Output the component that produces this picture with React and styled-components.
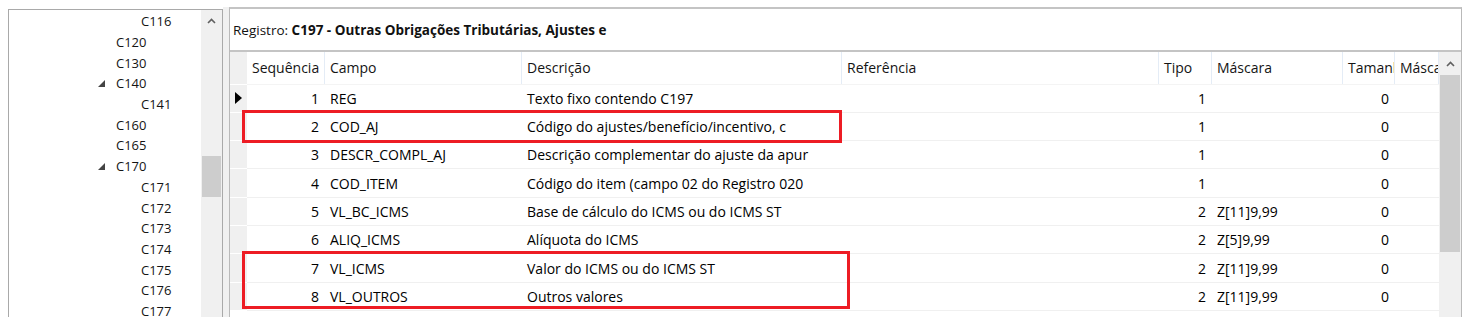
import React from 'react';
import styled, { createGlobalStyle } from 'styled-components';

const GlobalStyle = createGlobalStyle`
  html, body {
    margin: 0;
    padding: 0;
    background: #ffffff;
  }
  body {
    font-family: "Open Sans", "Noto Sans", sans-serif;
    font-size: 14px;
    color: #000;
  }
`;

const COLS = '17px 78px 197px 320px 317px 53px 131px 52px 44px';

const treeItems = [
  { t: 'C116', level: 3 },
  { t: 'C120', level: 2 },
  { t: 'C130', level: 2 },
  { t: 'C140', level: 2, open: true },
  { t: 'C141', level: 3 },
  { t: 'C160', level: 2 },
  { t: 'C165', level: 2 },
  { t: 'C170', level: 2, open: true },
  { t: 'C171', level: 3 },
  { t: 'C172', level: 3 },
  { t: 'C173', level: 3 },
  { t: 'C174', level: 3 },
  { t: 'C175', level: 3 },
  { t: 'C176', level: 3 },
  { t: 'C177', level: 3 },
];

const headers = ['', 'Sequência', 'Campo', 'Descrição', 'Referência', 'Tipo', 'Máscara', 'Tamanho', 'Máscara'];

const rows = [
  [1, 'REG', 'Texto fixo contendo C197', 1, '', 0],
  [2, 'COD_AJ', 'Código do ajustes/benefício/incentivo, c', 1, '', 0],
  [3, 'DESCR_COMPL_AJ', 'Descrição complementar do ajuste da apur', 1, '', 0],
  [4, 'COD_ITEM', 'Código do item (campo 02 do Registro 020', 1, '', 0],
  [5, 'VL_BC_ICMS', 'Base de cálculo do ICMS ou do ICMS ST', 2, 'Z[11]9,99', 0],
  [6, 'ALIQ_ICMS', 'Alíquota do ICMS', 2, 'Z[5]9,99', 0],
  [7, 'VL_ICMS', 'Valor do ICMS ou do ICMS ST', 2, 'Z[11]9,99', 0],
  [8, 'VL_OUTROS', 'Outros valores', 2, 'Z[11]9,99', 0],
];

const highlights = [
  { left: 12, top: 58, width: 600, height: 33 },
  { left: 12, top: 199, width: 608, height: 58 },
];

const Screen = styled.div`
  display: flex;
  align-items: flex-start;
  height: 317px;
  overflow: hidden;
  padding: 7px 8px 0 8px;
  box-sizing: border-box;
`;

const TreePanel = styled.div`
  display: flex;
  width: 215px;
  height: 330px;
  margin-top: 2px;
  border: 1px solid #a9a9a9;
  box-sizing: border-box;
  background: #fff;
`;

const TreeList = styled.div`
  flex: 1;
  padding-top: 1px;
  overflow: hidden;
  font-size: 13px;
`;

const TreeRow = styled.div`
  display: flex;
  align-items: center;
  height: 20.7px;
  padding-left: ${(p) => (p.$level === 3 ? 132 : 107)}px;
  position: relative;
  white-space: nowrap;
  color: #141414;
`;

const Expander = styled.svg`
  position: absolute;
  left: 89px;
  top: 7px;
  width: 7px;
  height: 7px;
`;

const ScrollBar = styled.div`
  display: flex;
  flex-direction: column;
  width: ${(p) => p.$w}px;
  background: #f0f0f0;
  flex-shrink: 0;
`;

const ArrowBox = styled.div`
  display: flex;
  align-items: center;
  justify-content: center;
  height: ${(p) => p.$h}px;
`;

const Thumb = styled.div`
  margin: ${(p) => p.$top}px 1px 0 1px;
  height: ${(p) => p.$h}px;
  background: #cdcdcd;
`;

const Splitter = styled.div`
  width: 6px;
  align-self: stretch;
  background: #f0f0f0;
  flex-shrink: 0;
`;

const RightPanel = styled.div`
  flex: 1;
  display: flex;
  flex-direction: column;
  height: 330px;
  border: 1px solid #b9b9b9;
  border-top: 2px solid #c4c4c4;
  box-sizing: border-box;
  background: #fff;
`;

const TitleBar = styled.div`
  display: flex;
  align-items: center;
  height: 41px;
  padding-left: 3px;
  border-bottom: 2px solid #c4c4c4;
  white-space: nowrap;
  font-size: 13.5px;
  color: #111;
  b {
    font-weight: 700;
  }
`;

const GridArea = styled.div`
  display: flex;
  flex: 1;
`;

const GridBody = styled.div`
  position: relative;
  flex: 1;
  overflow: hidden;
`;

const Row = styled.div`
  display: grid;
  grid-template-columns: ${COLS};
  height: ${(p) => (p.$header ? 32.5 : 28.33)}px;
  box-sizing: border-box;
  border-bottom: 1px solid ${(p) => (p.$header ? '#f4f4f4' : '#f0f0f0')};
`;

const Cell = styled.div`
  display: flex;
  align-items: center;
  justify-content: ${(p) => (p.$right ? 'flex-end' : 'flex-start')};
  padding: 0 ${(p) => (p.$right ? 6 : 0)}px 0 ${(p) => (p.$right ? 0 : 5)}px;
  overflow: hidden;
  white-space: nowrap;
  color: #000;
`;

const HeadCell = styled(Cell)`
  border-right: 1px solid #e4ecf6;
  color: #141414;
  padding-left: 5px;
`;

const Indicator = styled.div`
  display: flex;
  align-items: center;
  justify-content: center;
  background: #f0f0f0;
  border-bottom: 1px solid #fff;
  margin-bottom: -1px;
`;

const Highlight = styled.div`
  position: absolute;
  border: 3px solid #ed1c24;
  box-sizing: border-box;
  pointer-events: none;
`;

const UpArrow = () => (
  <svg width="9" height="6" viewBox="0 0 9 6">
    <polyline points="1,5 4.5,1.5 8,5" fill="none" stroke="#606060" strokeWidth="1.6" />
  </svg>
);

export default function App() {
  return (
    <>
      <GlobalStyle />
      <Screen>
        <TreePanel>
          <TreeList>
            {treeItems.map((it) => (
              <TreeRow key={it.t} $level={it.level}>
                {it.open && (
                  <Expander viewBox="0 0 7 7">
                    <polygon points="7,0 7,7 0,7" fill="#444" />
                  </Expander>
                )}
                {it.t}
              </TreeRow>
            ))}
          </TreeList>
          <ScrollBar $w={21}>
            <ArrowBox $h={22}>
              <UpArrow />
            </ArrowBox>
            <Thumb $top={124} $h={41} />
          </ScrollBar>
        </TreePanel>
        <Splitter />
        <RightPanel>
          <TitleBar>
            Registro:&nbsp;<b>C197 - Outras Obrigações Tributárias, Ajustes e</b>
          </TitleBar>
          <GridArea>
            <GridBody>
              <Row $header>
                {headers.map((h, i) =>
                  i === 0 ? <Indicator key={i} /> : <HeadCell key={i}>{h}</HeadCell>
                )}
              </Row>
              {rows.map((r, i) => (
                <Row key={r[0]}>
                  <Indicator>
                    {i === 0 && (
                      <svg width="7" height="12" viewBox="0 0 7 12">
                        <polygon points="0,0 7,6 0,12" fill="#000" />
                      </svg>
                    )}
                  </Indicator>
                  <Cell $right>{r[0]}</Cell>
                  <Cell>{r[1]}</Cell>
                  <Cell>{r[2]}</Cell>
                  <Cell />
                  <Cell $right>{r[3]}</Cell>
                  <Cell>{r[4]}</Cell>
                  <Cell $right>{r[5]}</Cell>
                  <Cell />
                </Row>
              ))}
              {highlights.map((h, i) => (
                <Highlight
                  key={i}
                  style={{ left: h.left, top: h.top, width: h.width, height: h.height }}
                />
              ))}
            </GridBody>
            <ScrollBar $w={22}>
              <ArrowBox $h={23}>
                <UpArrow />
              </ArrowBox>
              <Thumb $top={0} $h={177} />
            </ScrollBar>
          </GridArea>
        </RightPanel>
      </Screen>
    </>
  );
}
